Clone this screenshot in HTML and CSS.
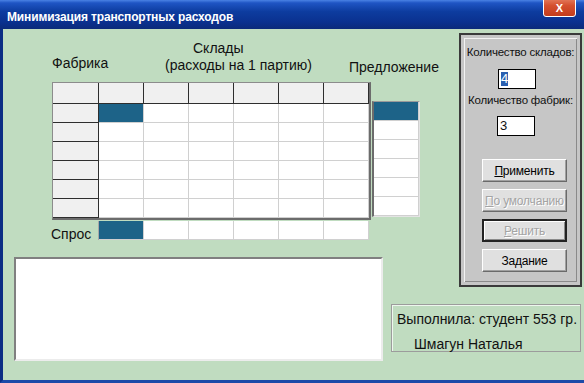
FILE: index.html
```html
<!DOCTYPE html>
<html lang="ru">
<head>
    <meta charset="UTF-8">
    <meta name="viewport" content="width=device-width, initial-scale=1.0">
    <title>Минимизация транспортных расходов</title>
    <link rel="stylesheet" href="styles.css">
</head>
<body>
    <div class="window">
        <div class="title-bar">
            <span class="title-text">Минимизация транспортных расходов</span>
            <div class="close-btn">X</div>
        </div>

        <div class="client">
            <div class="main">
                <div class="headings">
                    <div class="lbl lbl-factory">Фабрика</div>
                    <div class="lbl lbl-stores">
                        <div class="lbl-stores-top">Склады</div>
                        <div>(расходы на 1 партию)</div>
                    </div>
                    <div class="lbl lbl-supply">Предложение</div>
                </div>

                <div class="tables">
                    <div class="cost-grid">
                        <div class="cell fixed"></div><div class="cell fixed"></div><div class="cell fixed"></div><div class="cell fixed"></div><div class="cell fixed"></div><div class="cell fixed"></div><div class="cell fixed"></div>
                        <div class="cell fixed"></div><div class="cell sel"></div><div class="cell"></div><div class="cell"></div><div class="cell"></div><div class="cell"></div><div class="cell"></div>
                        <div class="cell fixed"></div><div class="cell"></div><div class="cell"></div><div class="cell"></div><div class="cell"></div><div class="cell"></div><div class="cell"></div>
                        <div class="cell fixed"></div><div class="cell"></div><div class="cell"></div><div class="cell"></div><div class="cell"></div><div class="cell"></div><div class="cell"></div>
                        <div class="cell fixed"></div><div class="cell"></div><div class="cell"></div><div class="cell"></div><div class="cell"></div><div class="cell"></div><div class="cell"></div>
                        <div class="cell fixed"></div><div class="cell"></div><div class="cell"></div><div class="cell"></div><div class="cell"></div><div class="cell"></div><div class="cell"></div>
                        <div class="cell fixed"></div><div class="cell"></div><div class="cell"></div><div class="cell"></div><div class="cell"></div><div class="cell"></div><div class="cell"></div>
                    </div>

                    <div class="supply-col">
                        <div class="cell sel"></div>
                        <div class="cell"></div>
                        <div class="cell"></div>
                        <div class="cell"></div>
                        <div class="cell"></div>
                        <div class="cell"></div>
                    </div>
                </div>

                <div class="demand-row">
                    <span class="lbl lbl-demand">Спрос</span>
                    <div class="demand-cells">
                        <div class="cell sel"></div>
                        <div class="cell"></div>
                        <div class="cell"></div>
                        <div class="cell"></div>
                        <div class="cell"></div>
                        <div class="cell"></div>
                    </div>
                </div>
            </div>

            <div class="panel">
                <div class="panel-label">Количество складов:</div>
                <div class="num-input"><span class="selected">4</span></div>
                <div class="panel-label panel-label-second">Количество фабрик:</div>
                <div class="num-input num-input-second">3</div>

                <div class="buttons">
                    <button class="win-btn"><u>П</u>рименить</button>
                    <button class="win-btn disabled"><u>П</u>о умолчанию</button>
                    <button class="win-btn disabled default"><u>Р</u>ешить</button>
                    <button class="win-btn">Задание</button>
                </div>
            </div>

            <div class="memo"></div>

            <div class="info">
                <div class="info-line">Выполнила: студент 553 гр.</div>
                <div class="info-line info-name">Шмагун Наталья</div>
            </div>
        </div>
    </div>
</body>
</html>
```

FILE: styles.css
```css
:root {
    --form-green: #c0dcc0;
    --frame-blue: #0b2d84;
    --panel-gray: #c6c6c6;
    --button-face: #e0e0e0;
    --selected-cell: #1d6388;
    --fixed-line: #2e2e2e;
    --data-line: #d0d0d0;
    --text-color: #111;
}

* {
    margin: 0;
    padding: 0;
    box-sizing: border-box;
}

body {
    font-family: 'Liberation Sans', Arial, sans-serif;
    color: var(--text-color);
    width: 584px;
    height: 383px;
    overflow: hidden;
}

.window {
    width: 584px;
    height: 383px;
    display: flex;
    flex-direction: column;
}

/* title bar */
.title-bar {
    height: 29px;
    display: flex;
    align-items: flex-start;
    padding-left: 7px;
    background: linear-gradient(to bottom, #4a82e4 0%, #1f55c4 10%, #0d3c9f 40%, #0a3190 75%, #0b2a7a 100%);
}

.title-text {
    margin-top: 10px;
    font-size: 12px;
    line-height: 15px;
    font-weight: bold;
    color: #fff;
    letter-spacing: -0.15px;
}

.close-btn {
    margin-left: auto;
    margin-right: 8px;
    margin-top: -4px;
    width: 33px;
    height: 21px;
    border: 1px solid #fff;
    border-radius: 3px;
    background: linear-gradient(to bottom, #e8876a 0%, #d5502f 45%, #c23c1c 100%);
    color: #fff;
    font-size: 11px;
    font-weight: bold;
    text-align: center;
    line-height: 22px;
}

/* client area */
.client {
    height: 354px;
    display: grid;
    grid-template-columns: 384px 69px 128px;
    grid-template-rows: 220px 50px 81px;
    grid-template-areas:
        "main main panel"
        "memo . panel"
        "memo info info";
    background: var(--form-green);
    border-left: 3px solid var(--frame-blue);
    border-bottom: 3px solid #1c4aa8;
}

.main {
    grid-area: main;
}

.lbl {
    font-size: 14px;
    line-height: 17px;
}

.headings {
    height: 53px;
    display: flex;
    align-items: flex-start;
    padding-left: 49px;
}

.lbl-factory {
    width: 113px;
    margin-top: 26px;
}

.lbl-stores {
    width: 184px;
    margin-top: 11px;
}

.lbl-stores-top {
    padding-left: 28px;
}

.lbl-supply {
    margin-top: 30px;
}

.tables {
    display: flex;
    align-items: flex-start;
    padding-left: 49px;
}

.cost-grid {
    display: grid;
    grid-template-columns: 46px repeat(6, 45px);
    grid-template-rows: 21px repeat(6, 19px);
    background: #fff;
    border-top: 1px solid #8c8c8c;
    border-left: 1px solid #8c8c8c;
    border-right: 2px solid #6c6c6c;
    border-bottom: 2px solid #6c6c6c;
}

.cell {
    background: #fff;
    border-right: 1px solid var(--data-line);
    border-bottom: 1px solid var(--data-line);
}

.cell.fixed {
    background: #f0f0f0;
    border-color: var(--fixed-line);
}

.cell.sel {
    background: var(--selected-cell);
}

.supply-col {
    margin-left: 1px;
    margin-top: 19px;
    width: 48px;
    border-left: 2px solid #6c6c6c;
    border-top: 1px solid #9a9a9a;
    border-right: 1px solid #e4e4e4;
    border-bottom: 1px solid #e4e4e4;
}

.supply-col .cell {
    height: 19px;
}

.demand-row {
    display: flex;
    align-items: flex-start;
}

.lbl-demand {
    width: 95px;
    padding-left: 48px;
    margin-top: 5px;
    line-height: 19px;
}

.demand-cells {
    margin-top: 1px;
    display: flex;
    border-left: 1px solid #a8a8a8;
}

.demand-cells .cell {
    width: 45px;
    height: 19px;
}

/* settings panel */
.panel {
    grid-area: panel;
    margin-top: 4px;
    margin-left: 3px;
    width: 123px;
    height: 254px;
    display: flex;
    flex-direction: column;
    align-items: center;
    padding-top: 10px;
    background: var(--panel-gray);
    border: 2px solid #3a3a3a;
    box-shadow:
        inset 0 0 0 3px var(--panel-gray),
        inset 4px 4px 0 0 #f2f2f2,
        inset -4px -4px 0 0 #8a8a8a;
}

.panel-label {
    font-size: 11.5px;
    line-height: 15px;
    white-space: nowrap;
    letter-spacing: -0.2px;
}

.panel-label-second {
    margin-top: 4px;
}

.num-input {
    align-self: flex-start;
    margin-left: 37px;
    margin-top: 9px;
    width: 38px;
    height: 20px;
    padding: 2px 0 0 2px;
    background: #fff;
    border: 1px solid #000;
    font-size: 13px;
    line-height: 14px;
}

.num-input-second {
    margin-left: 36px;
    margin-top: 8px;
}

.selected {
    display: inline-block;
    background: #2a5fb0;
    color: #fff;
}

.buttons {
    align-self: flex-start;
    margin-left: 21px;
    margin-top: 23px;
    display: flex;
    flex-direction: column;
    gap: 7px;
}

.win-btn {
    width: 85px;
    height: 23px;
    font-family: 'Liberation Sans', Arial, sans-serif;
    font-size: 12px;
    letter-spacing: -0.2px;
    color: #000;
    background: var(--button-face);
    border: 1px solid;
    border-color: #fff #6a6a6a #6a6a6a #fff;
    box-shadow: inset -1px -1px 0 #a0a0a0;
}

.win-btn.disabled {
    color: #a4a4a4;
    text-shadow: 1px 1px 0 #fff;
}

.win-btn.default {
    border: 2px solid #222;
    box-shadow: inset 1px 1px 0 #fff, inset -1px -1px 0 #8a8a8a;
}

/* output memo */
.memo {
    grid-area: memo;
    margin-top: 8px;
    margin-left: 11px;
    width: 369px;
    height: 104px;
    background: #fff;
    border-top: 2px solid #808080;
    border-left: 2px solid #808080;
    border-right: 2px solid #ececec;
    border-bottom: 2px solid #ececec;
}

/* author info */
.info {
    grid-area: info;
    margin-top: 5px;
    margin-left: 4px;
    width: 190px;
    height: 48px;
    padding: 6px 0 0 5px;
    border: 1px solid #9c9c9c;
    box-shadow: inset 1px 1px 0 #eef6ee;
}

.info-line {
    font-size: 14px;
    line-height: 17px;
    white-space: nowrap;
}

.info-name {
    margin-top: 8px;
    padding-left: 17px;
}
```
